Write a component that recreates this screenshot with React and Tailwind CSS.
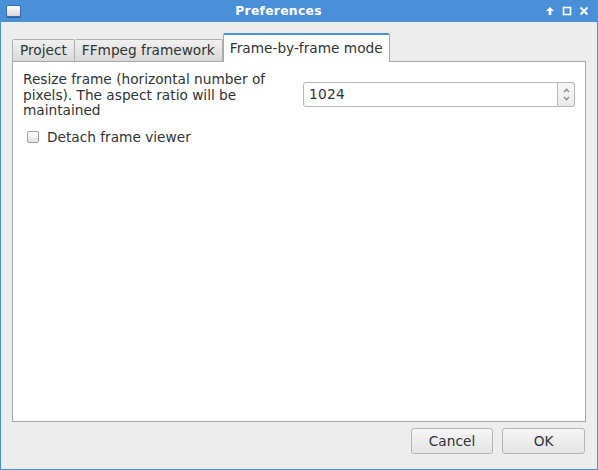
import React from 'react';

export default function App(){
  const tabs = ['Project','FFmpeg framework','Frame-by-frame mode'];
  return (
    <div className="w-[598px] h-[470px] flex flex-col bg-[#4a90d9] text-[#2e3436]" style={{fontFamily:'"DejaVu Sans", sans-serif'}}>
      {/* title bar */}
      <div className="h-[22px] flex items-center px-[6px] text-white shrink-0">
        <div className="w-[15px] h-[12px] rounded-[2px] bg-gradient-to-b from-white to-[#d8d8d8] border border-[#3a70b0] shadow-[0_1px_0_#2e5f99]" />
        <div className="flex-1 text-center text-[12.3px] font-bold tracking-[0.3px] pr-[9px]">Preferences</div>
        <div className="flex items-center gap-[7px] pr-[3px]">
          <svg width="10" height="10" viewBox="0 0 10 10"><path d="M5 1 L9 5 H6.3 V9 H3.7 V5 H1 Z" fill="white"/></svg>
          <svg width="10" height="10" viewBox="0 0 10 10"><rect x="1.5" y="1.5" width="7" height="7" fill="none" stroke="white" strokeWidth="1.6"/></svg>
          <svg width="10" height="10" viewBox="0 0 10 10"><path d="M1.5 1.5 L8.5 8.5 M8.5 1.5 L1.5 8.5" stroke="white" strokeWidth="2"/></svg>
        </div>
      </div>
      {/* body */}
      <div className="flex-1 mx-[1px] mb-[1px] bg-[#ededed] flex flex-col px-[11px] text-[13.7px]">
        <div className="flex items-end h-[39px] pt-[11px]">
          {tabs.map((t,i)=> i===2 ? (
            <div key={t} className="h-[29px] px-[6px] bg-white border border-[#a8a8a8] border-b-0 border-t-[#4a90d9] border-t-2 rounded-t-[2px] leading-[26px] -mb-[1px] relative z-10">{t}</div>
          ) : (
            <div key={t} className={`h-[22px] px-[7px] bg-gradient-to-b from-[#f0f0f0] to-[#d9d9d9] border border-[#b0b0b0] border-b-0 ${i===1?'border-l-0':''} rounded-t-[2px] leading-[21px]`}>{t}</div>
          ))}
        </div>
        <div className="h-[361px] bg-white border border-[#a8a8a8] flex flex-col px-[10px] pt-[10px]">
          <div className="flex items-start">
            <div className="w-[280px] leading-[15.5px]">Resize frame (horizontal number of pixels). The aspect ratio will be maintained</div>
            <div className="flex ml-[10px] mt-[10px]">
              <div className="w-[255px] h-[25px] border border-[#b6b6b6] rounded-l-[3px] leading-[23px] px-[5px] tracking-[0.3px]">1024</div>
              <div className="w-[17px] h-[25px] border border-l-0 border-[#b6b6b6] rounded-r-[3px] bg-gradient-to-b from-[#f8f8f8] to-[#e8e8e8] flex flex-col items-center justify-center gap-[3px]">
                <svg width="7" height="5" viewBox="0 0 7 5"><path d="M1 4 L3.5 1.3 L6 4" fill="none" stroke="#888" strokeWidth="1.3"/></svg>
                <svg width="7" height="5" viewBox="0 0 7 5"><path d="M1 1 L3.5 3.7 L6 1" fill="none" stroke="#888" strokeWidth="1.3"/></svg>
              </div>
            </div>
          </div>
          <div className="flex items-center mt-[8px] ml-[4px]">
            <div className="w-[12px] h-[12px] border border-[#a0a0a0] rounded-[2px] bg-gradient-to-b from-white to-[#e4e4e4]" />
            <span className="ml-[8px]">Detach frame viewer</span>
          </div>
        </div>
        <div className="flex justify-end gap-[9px] mt-[6px] pr-[1px]">
          <button className="w-[82px] h-[26px] border border-[#b4b4b4] rounded-[3px] bg-gradient-to-b from-[#f6f6f6] to-[#e4e4e4]">Cancel</button>
          <button className="w-[83px] h-[26px] border border-[#b4b4b4] rounded-[3px] bg-gradient-to-b from-[#f6f6f6] to-[#e4e4e4]">OK</button>
        </div>
      </div>
    </div>
  );
}
